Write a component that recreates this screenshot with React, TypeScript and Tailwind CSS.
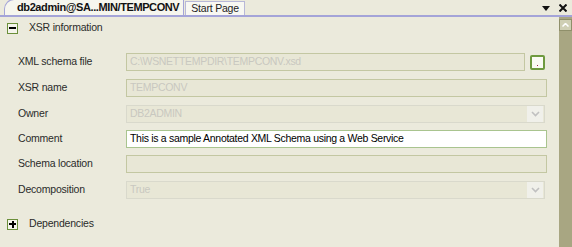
import React from "react";

const font = { fontFamily: '"Liberation Sans", Arial, sans-serif' };

function Row({ label, h, children }: { label: string; h: string; children: React.ReactNode }) {
  return (
    <div className={`flex items-center ${h}`}>
      <div className="w-[108px] shrink-0 text-[10.5px] tracking-[-0.2px] text-[#2a2a2a]">{label}</div>
      {children}
    </div>
  );
}

function Field({ value, white, w = "w-[421px]" }: { value?: string; white?: boolean; w?: string }) {
  return (
    <div
      className={`${w} h-[18px] border flex items-center px-[3px] text-[10.5px] tracking-[-0.3px] ${
        white ? "bg-white border-[#a9c48f] text-black" : "bg-[#e8e7d6] border-[#c3c7a2] text-[#c8c8c0]"
      }`}
    >
      {value}
    </div>
  );
}

function SelectField({ value }: { value?: string }) {
  return (
    <div className="w-[419px] h-[18px] border border-[#d9d9cc] bg-[#e8e7d6] flex items-center text-[10.5px] tracking-[-0.3px] text-[#c8c8c0]">
      <span className="flex-1 px-[3px]">{value}</span>
      <div className="w-[16px] h-[16px] bg-[#f0f0ea] flex items-center justify-center mr-[1px]">
        <svg width="9" height="6" viewBox="0 0 9 6">
          <path d="M1 1 L4.5 4.5 L8 1" stroke="#c0c0c0" strokeWidth="1.6" fill="none" />
        </svg>
      </div>
    </div>
  );
}

function Box({ plus }: { plus?: boolean }) {
  return (
    <div className="w-[11px] h-[11px] border border-[#6b8f3a] bg-[#f4f4ec] flex items-center justify-center relative">
      <div className="absolute w-[7px] h-[2px] bg-black" />
      {plus && <div className="absolute w-[2px] h-[7px] bg-black" />}
    </div>
  );
}

export default function App() {
  return (
    <div style={font} className="w-[572px] h-[247px] bg-[#ebeadc] flex flex-col overflow-hidden">
      {/* Tab strip */}
      <div className="h-[17px] flex items-end border-b-2 border-[#a4a4d8] relative">
        <div className="ml-[4px] h-[16px] flex items-end">
          <div className="h-[16px] pl-[12px] pr-[4px] bg-[#f6f6ee] border border-b-0 border-[#a4a4d8] rounded-tl-[10px] flex items-center text-[11px] font-bold text-[#111] tracking-[-0.4px]">
            db2admin@SA...MIN/TEMPCONV
          </div>
          <div className="h-[14px] px-[5px] ml-[1px] bg-[#f8f8f2] border border-b-0 border-[#b8b8d8] flex items-center text-[10.5px] tracking-[-0.2px] text-[#222]">
            Start Page
          </div>
        </div>
        <div className="flex-1" />
        <div className="flex items-center gap-[9px] mr-[5px] mb-[3px]">
          <svg width="8" height="5" viewBox="0 0 8 5">
            <path d="M0 0 H8 L4 5 Z" fill="#111" />
          </svg>
          <svg width="8" height="8" viewBox="0 0 8 8">
            <path d="M0.5 0.5 L7.5 7.5 M7.5 0.5 L0.5 7.5" stroke="#111" strokeWidth="2" />
          </svg>
        </div>
      </div>

      <div className="flex flex-1 min-h-0">
        <div className="flex-1 flex flex-col pl-[7px]">
          <div className="flex items-center h-[12px] mt-[5px] gap-[11px]">
            <Box />
            <span className="text-[10.5px] tracking-[-0.2px] text-[#2a2a2a]">XSR information</span>
          </div>
          <div className="pl-[11px] mt-[15px] flex flex-col">
            <Row label="XML schema file" h="h-[26px]">
              <Field value="C:\WSNETTEMPDIR\TEMPCONV.xsd" w="w-[399px]" />
              <div className="ml-[5px] w-[15px] h-[15px] border-2 border-[#6f9a3f] rounded-[2px] bg-[#fbfbf4] flex items-end justify-center pb-[2px]">
                <div className="w-[1px] h-[1px] bg-[#a02050]" />
              </div>
            </Row>
            <Row label="XSR name" h="h-[26px]">
              <Field value="TEMPCONV" />
            </Row>
            <Row label="Owner" h="h-[25px]">
              <SelectField value="DB2ADMIN" />
            </Row>
            <Row label="Comment" h="h-[25px]">
              <Field white value="This is a sample Annotated XML Schema using a Web Service" />
            </Row>
            <Row label="Schema location" h="h-[26px]">
              <Field />
            </Row>
            <Row label="Decomposition" h="h-[26px]">
              <SelectField value="True" />
            </Row>
          </div>
          <div className="flex items-center h-[12px] mt-[15px] gap-[11px]">
            <Box plus />
            <span className="text-[10.5px] tracking-[-0.2px] text-[#2a2a2a]">Dependencies</span>
          </div>
        </div>
        {/* Scrollbar */}
        <div className="w-[13px] bg-[#a8a682] flex flex-col pt-[2px]">
          <div className="w-[13px] h-[12px] bg-[#cfcfb4] border border-[#8f8f6a] flex items-center justify-center">
            <svg width="7" height="4" viewBox="0 0 7 4">
              <path d="M0.5 3.5 L3.5 0.5 L6.5 3.5" stroke="#fff" strokeWidth="1.5" fill="none" />
            </svg>
          </div>
        </div>
      </div>
    </div>
  );
}
